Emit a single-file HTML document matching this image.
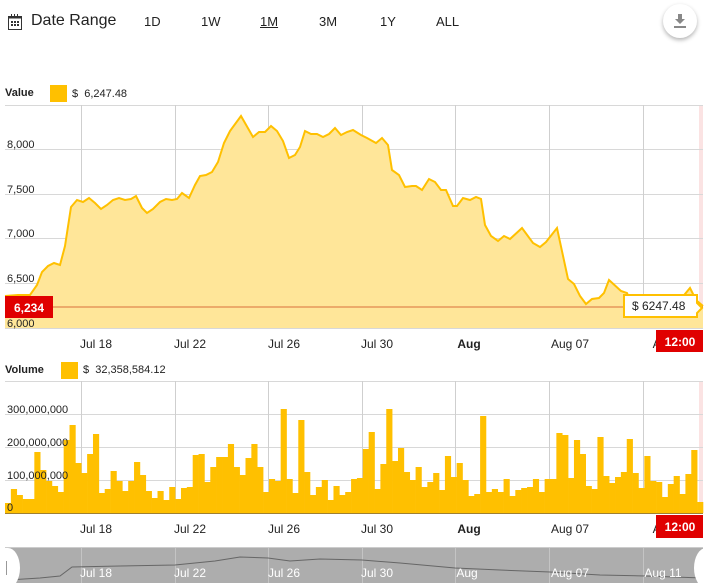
<!DOCTYPE html>
<html><head><meta charset="utf-8"><style>
*{margin:0;padding:0;box-sizing:border-box}
body{width:709px;height:583px;overflow:hidden;background:#fff;font-family:"Liberation Sans",sans-serif;color:#222;position:relative}
.a{position:absolute;white-space:nowrap}
.btn{font-size:13px;top:14px}
</style></head><body>
<svg class="a" style="left:8px;top:14px" width="15" height="16" viewBox="0 0 15 16">
<rect x="0.5" y="2.5" width="13" height="13" fill="none" stroke="#333"/>
<rect x="0.5" y="2.5" width="13" height="2" fill="#333"/>
<g fill="#333"><rect x="3" y="0" width="1" height="3"/><rect x="6" y="0" width="1" height="3"/><rect x="9" y="0" width="1" height="3"/>
<rect x="3" y="7" width="2" height="2"/><rect x="6" y="7" width="2" height="2"/><rect x="9" y="7" width="2" height="2"/>
<rect x="3" y="10" width="2" height="2"/><rect x="6" y="10" width="2" height="2"/><rect x="9" y="10" width="2" height="2"/></g></svg>
<div class="a" style="left:31px;top:12px;font-size:16px;color:#222">Date Range</div>
<div class="a btn" style="left:144px">1D</div>
<div class="a btn" style="left:201px">1W</div>
<div class="a btn" style="left:260px;text-decoration:underline">1M</div>
<div class="a btn" style="left:319px">3M</div>
<div class="a btn" style="left:380px">1Y</div>
<div class="a btn" style="left:436px">ALL</div>
<div class="a" style="left:663px;top:4px;width:34px;height:34px;border-radius:50%;background:#fff;box-shadow:0 2px 4px rgba(0,0,0,.3)"></div>
<svg class="a" style="left:673px;top:13px" width="14" height="16" viewBox="0 0 14 16"><path d="M5 1h4v5h3l-5 5-5-5h3z" fill="#888"/><rect x="1" y="13" width="12" height="2" fill="#888"/></svg>

<div class="a" style="left:5px;top:87px;font-size:11px;font-weight:bold">Value</div>
<div class="a" style="left:50px;top:85px;width:17px;height:17px;background:#ffc000"></div>
<div class="a" style="left:72px;top:88px;font-size:11px">$&nbsp; 6,247.48</div>

<svg class="a" style="left:0;top:0" width="709" height="583">
<rect x="699" y="105" width="4" height="223" fill="#fbe3e3"/>
<rect x="699" y="381" width="4" height="132" fill="#fbe3e3"/>
<g stroke="#d8d8d8" stroke-width="1">
<line x1="5" y1="105.5" x2="703" y2="105.5"/><line x1="5" y1="149.5" x2="703" y2="149.5"/><line x1="5" y1="194.5" x2="703" y2="194.5"/><line x1="5" y1="238.5" x2="703" y2="238.5"/><line x1="5" y1="283.5" x2="703" y2="283.5"/><line x1="5" y1="328.5" x2="703" y2="328.5"/>
<line x1="5" y1="381.5" x2="703" y2="381.5"/><line x1="5" y1="414.5" x2="703" y2="414.5"/><line x1="5" y1="447.5" x2="703" y2="447.5"/><line x1="5" y1="480.5" x2="703" y2="480.5"/>
</g>
<g stroke="#cfcfcf"><line x1="81.5" y1="105" x2="81.5" y2="328"/><line x1="175.5" y1="105" x2="175.5" y2="328"/><line x1="268.5" y1="105" x2="268.5" y2="328"/><line x1="362.5" y1="105" x2="362.5" y2="328"/><line x1="455.5" y1="105" x2="455.5" y2="328"/><line x1="549.5" y1="105" x2="549.5" y2="328"/><line x1="643.5" y1="105" x2="643.5" y2="328"/>
<line x1="81.5" y1="381" x2="81.5" y2="513"/><line x1="175.5" y1="381" x2="175.5" y2="513"/><line x1="268.5" y1="381" x2="268.5" y2="513"/><line x1="362.5" y1="381" x2="362.5" y2="513"/><line x1="455.5" y1="381" x2="455.5" y2="513"/><line x1="549.5" y1="381" x2="549.5" y2="513"/><line x1="643.5" y1="381" x2="643.5" y2="513"/></g>
<g id="pl"></g>
<line x1="5" y1="307" x2="703" y2="307" stroke="#d9703a" stroke-width="1"/>
<g id="vb" fill="#ffc000"></g>
<line x1="5" y1="513.5" x2="703" y2="513.5" stroke="#a08030"/>
<g font-size="11" fill="#222" font-family="Liberation Sans,sans-serif">
<text x="7" y="148">8,000</text><text x="7" y="193">7,500</text><text x="7" y="237">7,000</text><text x="7" y="282">6,500</text><text x="7" y="327">6,000</text>
<text x="7" y="413">300,000,000</text><text x="7" y="446">200,000,000</text><text x="7" y="479">100,000,000</text><text x="7" y="511">0</text>
</g>
<g font-size="12" fill="#222" font-family="Liberation Sans,sans-serif" text-anchor="middle">
<text x="96" y="348">Jul 18</text><text x="190" y="348">Jul 22</text><text x="284" y="348">Jul 26</text><text x="377" y="348">Jul 30</text><text x="469" y="348" font-weight="bold">Aug</text><text x="570" y="348">Aug 07</text><text x="660" y="348">Au</text>
<text x="96" y="533">Jul 18</text><text x="190" y="533">Jul 22</text><text x="284" y="533">Jul 26</text><text x="377" y="533">Jul 30</text><text x="469" y="533" font-weight="bold">Aug</text><text x="570" y="533">Aug 07</text><text x="660" y="533">Au</text>
</g>
<rect x="5" y="296" width="48" height="22" fill="#e00000"/>
<text x="29" y="312" font-size="12" font-weight="bold" fill="#fff" text-anchor="middle" font-family="Liberation Sans,sans-serif">6,234</text>
<path d="M624 295H697V303L702 308L697 313V317H624Z" fill="#fff" stroke="#ffc000" stroke-width="2"/>
<text x="632" y="310" font-size="12" fill="#222" font-family="Liberation Sans,sans-serif">$ 6247.48</text>
<rect x="656" y="330" width="47" height="22" fill="#e00000"/>
<text x="680" y="346" font-size="12" font-weight="bold" fill="#fff" text-anchor="middle" font-family="Liberation Sans,sans-serif">12:00</text>
<rect x="656" y="515" width="47" height="23" fill="#e00000"/>
<text x="680" y="531" font-size="12" font-weight="bold" fill="#fff" text-anchor="middle" font-family="Liberation Sans,sans-serif">12:00</text>
<line x1="5" y1="547.5" x2="703" y2="547.5" stroke="#ccc"/>
<rect x="8" y="548" width="695" height="35" fill="#adadad"/>
<g stroke="#c4c4c4"><line x1="81.5" y1="548" x2="81.5" y2="583"/><line x1="175.5" y1="548" x2="175.5" y2="583"/><line x1="268.5" y1="548" x2="268.5" y2="583"/><line x1="362.5" y1="548" x2="362.5" y2="583"/><line x1="455.5" y1="548" x2="455.5" y2="583"/><line x1="549.5" y1="548" x2="549.5" y2="583"/><line x1="643.5" y1="548" x2="643.5" y2="583"/></g>
<polyline points="8,580 40,578 60,576 72,567 120,566 175,565 215,561 240,557 268,558 290,561 320,559 362,560 400,563 455,568 500,570 550,572 600,575 645,576 703,578" fill="none" stroke="#666" stroke-width="1"/>
<g font-size="12" fill="#fff" font-family="Liberation Sans,sans-serif" text-anchor="middle">
<text x="96" y="577">Jul 18</text><text x="190" y="577">Jul 22</text><text x="284" y="577">Jul 26</text><text x="377" y="577">Jul 30</text><text x="467" y="577">Aug</text><text x="570" y="577">Aug 07</text><text x="663" y="577">Aug 11</text></g>
<ellipse cx="8" cy="568" rx="12" ry="20" fill="#fff"/>
<ellipse cx="706" cy="568" rx="12" ry="20" fill="#fff"/>
<line x1="6.5" y1="561" x2="6.5" y2="575" stroke="#999"/>
</svg>
<script>
var pts=[[5,296],[18,295],[30,295],[37,285],[42,272],[48,266],[54,263],[60,265],[65,246],[71,207],[77,200],[83,202],[89,198],[95,203],[101,209],[107,205],[113,200],[119,198],[125,200],[131,199],[136,196],[142,208],[147,213],[153,209],[160,202],[166,199],[172,200],[177,199],[182,193],[189,198],[195,185],[200,176],[206,175],[212,172],[218,162],[224,143],[230,131],[241,116],[253,137],[259,132],[265,132],[271,126],[277,131],[283,141],[289,158],[295,155],[300,147],[305,131],[311,134],[317,134],[323,137],[329,134],[335,128],[341,135],[347,132],[353,130],[361,135],[367,138],[376,143],[382,138],[388,145],[392,170],[399,175],[405,187],[412,186],[416,186],[422,190],[429,179],[435,182],[441,190],[446,190],[453,206],[457,206],[463,198],[470,200],[476,197],[481,199],[485,225],[491,236],[498,241],[504,236],[510,239],[522,228],[533,243],[540,247],[546,242],[557,228],[568,279],[574,284],[580,296],[586,304],[592,299],[599,298],[604,293],[609,280],[621,291],[627,293],[632,305],[640,312],[648,308],[655,300],[662,309],[670,304],[680,300],[690,288],[696,300],[703,306]];
var s=pts.map(function(p){return p.join(',')}).join(' ');
var ns='http://www.w3.org/2000/svg';
var g=document.getElementById('pl');
var a=document.createElementNS(ns,'polygon');a.setAttribute('points','5,328 '+s+' 703,328');a.setAttribute('fill','#ffe699');g.appendChild(a);
var l=document.createElementNS(ns,'polyline');l.setAttribute('points',s);l.setAttribute('fill','none');l.setAttribute('stroke','#ffc000');l.setAttribute('stroke-width','2');g.appendChild(l);
var t=[503,489,495,499,499,452,470,481,486,492,440,425,463,473,454,434,493,489,471,481,491,481,462,475,491,498,491,500,487,499,488,487,455,454,482,467,457,457,444,467,475,458,444,467,492,479,481,409,479,493,420,472,495,487,480,500,486,495,492,
479,478,449,432,489,464,409,461,448,472,480,467,487,482,473,490,456,477,463,480,496,494,416,492,489,492,479,496,490,488,487,479,492,479,479,433,435,478,440,454,486,489,437,476,483,477,472,439,473,488,456,481,482,497,484,476,494,474,450,502];
var w=698/t.length,vb=document.getElementById('vb');
t.forEach(function(y,i){var r=document.createElementNS(ns,'rect');r.setAttribute('x',(5+i*w).toFixed(2));r.setAttribute('y',y);r.setAttribute('width',(w+0.3).toFixed(2));r.setAttribute('height',513-y);vb.appendChild(r);});
</script>
<div class="a" style="left:5px;top:364px;font-size:11px;font-weight:bold">Volume</div>
<div class="a" style="left:61px;top:362px;width:17px;height:17px;background:#ffc000"></div>
<div class="a" style="left:83px;top:364px;font-size:11px">$&nbsp; 32,358,584.12</div>
</body></html>
